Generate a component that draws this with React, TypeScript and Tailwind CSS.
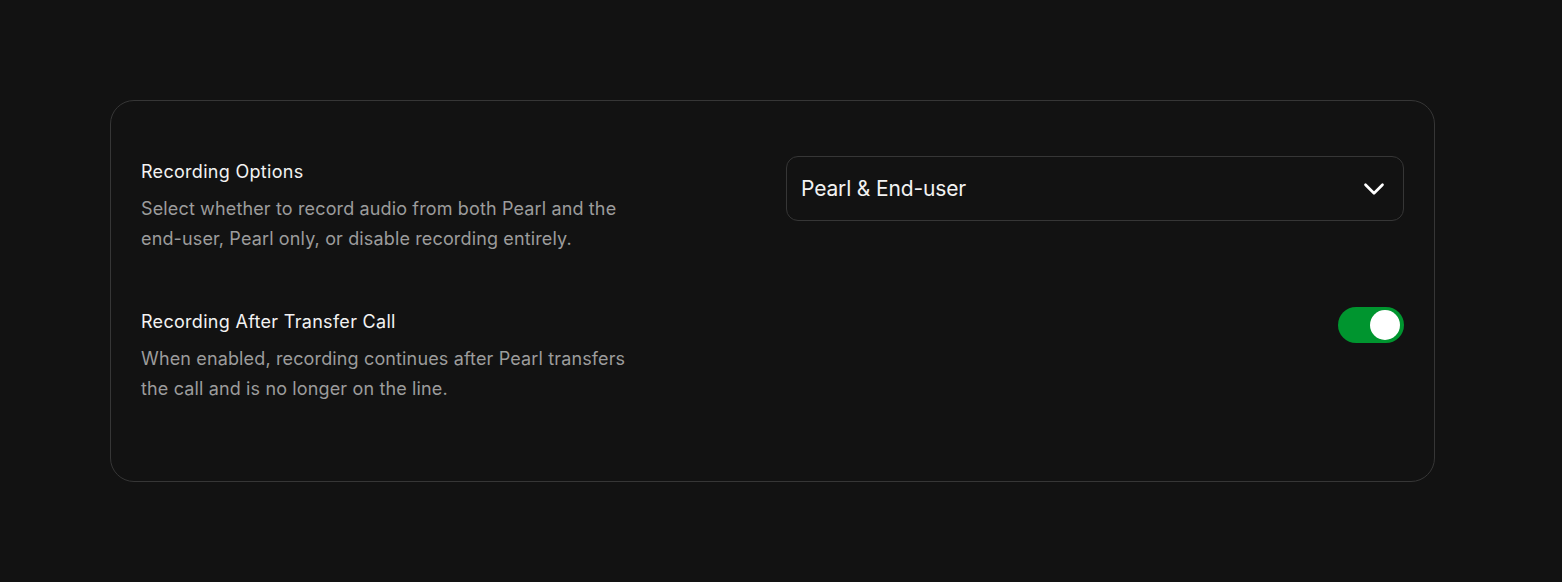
import { ChevronDown } from 'lucide-react'

function SettingText({ title, children }: { title: string; children: React.ReactNode }) {
  return (
    <div className="w-[500px] pt-[2px]">
      <h3 className="text-[18px] leading-[28px] tracking-[0.3px] text-[#f2f2f2]">{title}</h3>
      <p className="mt-2 text-[18px] leading-[30px] tracking-[0.14px] text-[#9c9c9c]">{children}</p>
    </div>
  )
}

export default function App() {
  return (
    <div
      className="min-h-[582px] w-full bg-[#121212] pl-[110px] pr-[127px] pt-[100px]"
      style={{ fontFamily: 'Inter, "Noto Sans", sans-serif' }}
    >
      <div className="flex flex-col gap-[52px] rounded-[24px] border border-[#363636] bg-[#121212] pb-[77px] pl-[30px] pr-[30px] pt-[55px]">
        {/* Recording options */}
        <div className="flex items-start justify-between">
          <SettingText title="Recording Options">
            Select whether to record audio from both Pearl and the end-user, Pearl only, or disable
            recording entirely.
          </SettingText>
          <button className="flex h-[65px] w-[618px] items-center justify-between rounded-[12px] border border-[#363636] bg-[#121212] pl-[14px] pr-[12px] text-left">
            <span className="text-[21px] tracking-[-0.15px] text-[#f2f2f2]">Pearl &amp; End-user</span>
            <ChevronDown className="h-[34px] w-[34px] text-white" strokeWidth={1.9} />
          </button>
        </div>

        {/* Recording after transfer */}
        <div className="flex items-start justify-between">
          <SettingText title="Recording After Transfer Call">
            When enabled, recording continues after Pearl transfers the call and is no longer on the
            line.
          </SettingText>
          <div className="mt-[1px] flex h-[36px] w-[66px] items-center justify-end rounded-full bg-[#00952f] px-[4px]">
            <span className="h-[30px] w-[30px] rounded-full bg-white" />
          </div>
        </div>
      </div>
    </div>
  )
}
